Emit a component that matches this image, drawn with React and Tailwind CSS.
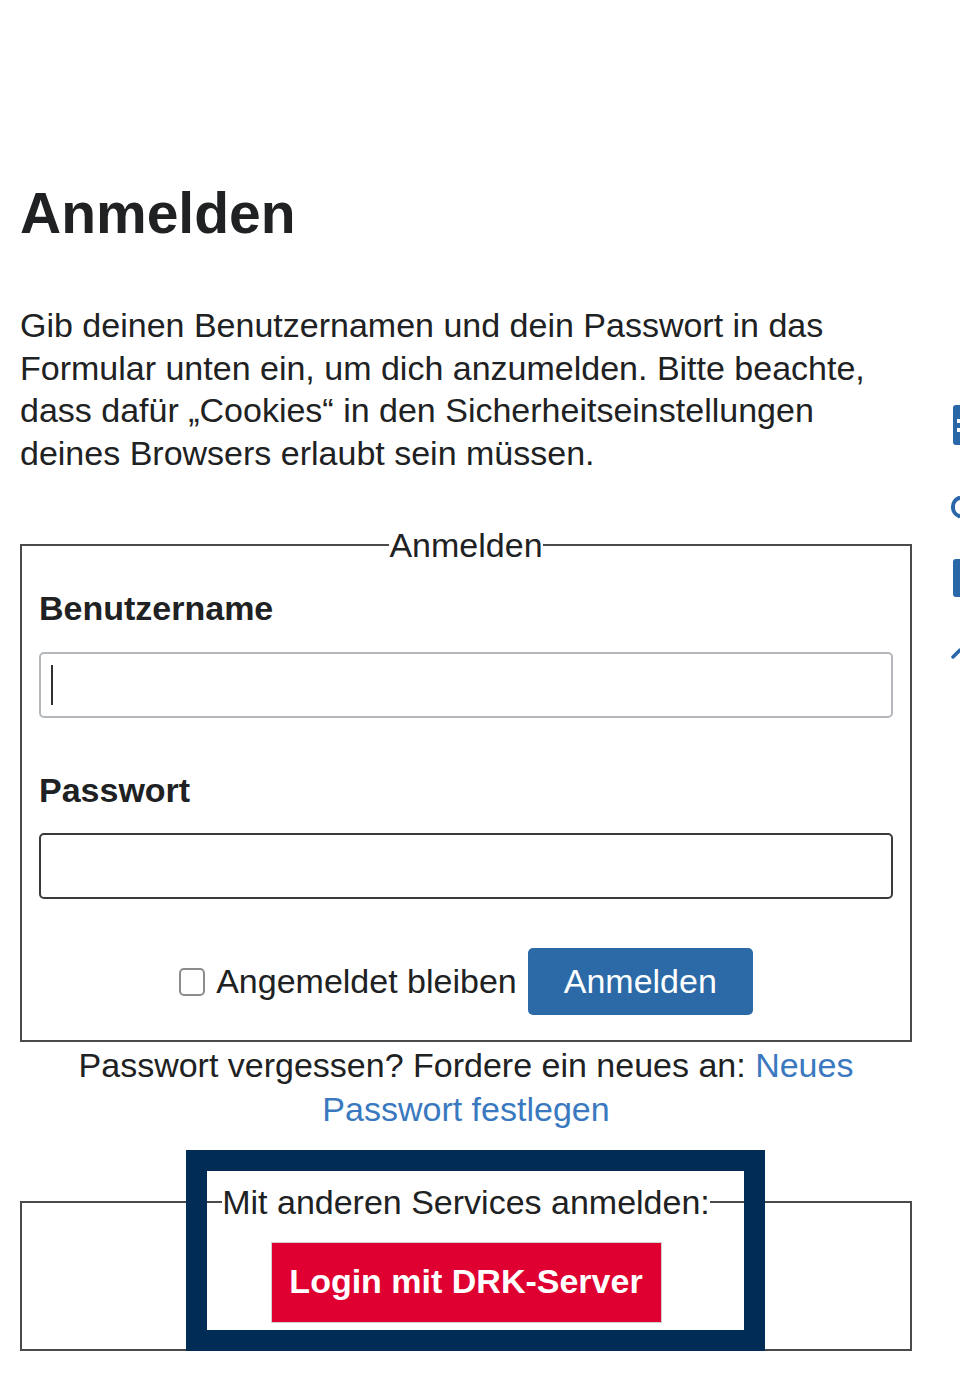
import { useState } from "react";

const font = { fontFamily: '"Liberation Sans", Arial, sans-serif' };

function SideIcons() {
  // partially visible toolbar icons cut off at the right edge
  return (
    <div className="absolute left-[950px] top-[400px] flex w-[10px] flex-col overflow-hidden">
      <div className="ml-[3px] mt-[5px] h-[40px] w-[14px] rounded-[3px] bg-[#2a67a8] flex flex-col justify-center gap-[5px] pl-[4px]">
        <span className="block h-[4px] w-[8px] bg-white" />
        <span className="block h-[4px] w-[8px] bg-white" />
      </div>
      <svg className="mt-[50px]" width="10" height="28" viewBox="0 0 10 28">
        <path d="M9 3 A 9 9 0 0 0 3 12 A 9 9 0 0 0 9 21" fill="none" stroke="#2a67a8" strokeWidth="4" strokeLinecap="round" />
      </svg>
      <div className="ml-[3px] mt-[36px] h-[38px] w-[14px] rounded-[3px] bg-[#2a67a8]" />
      <svg className="mt-[44px]" width="10" height="20" viewBox="0 0 10 20">
        <path d="M3 16 L10 9" fill="none" stroke="#2a67a8" strokeWidth="3.5" strokeLinecap="round" />
      </svg>
    </div>
  );
}

export default function App() {
  const [username, setUsername] = useState("");
  const [password, setPassword] = useState("");
  const [remember, setRemember] = useState(false);

  return (
    <div className="relative h-[1387px] w-full overflow-hidden bg-white text-[#202122]" style={font}>
      <SideIcons />

      <div className="ml-[20px] w-[892px]">
        <h1 className="pt-[178px] text-[57px] font-bold leading-[71px]">Anmelden</h1>

        <p className="mt-[55px] text-[34px] leading-[42.5px]">
          Gib deinen Benutzernamen und dein Passwort in das Formular unten ein, um dich anzumelden. Bitte beachte,
          dass dafür „Cookies“ in den Sicherheitseinstellungen deines Browsers erlaubt sein müssen.
        </p>

        <form onSubmit={(e) => e.preventDefault()}>
          <fieldset className="mt-[50px] border-2 border-[#4a4a4a] px-[17px] pb-[25px] pt-[20px]">
            <legend className="mx-auto text-[34px] leading-[42.5px]">Anmelden</legend>

            <label htmlFor="user" className="block text-[34px] font-bold leading-[42.5px]">
              Benutzername
            </label>
            <div className="relative mt-[23px]">
              <input
                id="user"
                type="text"
                value={username}
                onChange={(e) => setUsername(e.target.value)}
                className="block h-[66px] w-full rounded-[5px] border-2 border-[#b4b8bd] px-[13px] text-[34px] outline-none"
              />
              {username === "" && (
                <span className="absolute left-[12px] top-[13px] h-[40px] w-[2px] bg-[#303030]" />
              )}
            </div>

            <label htmlFor="pass" className="mt-[51px] block text-[34px] font-bold leading-[42.5px]">
              Passwort
            </label>
            <input
              id="pass"
              type="password"
              value={password}
              onChange={(e) => setPassword(e.target.value)}
              className="mt-[21.5px] block h-[66px] w-full rounded-[5px] border-2 border-[#3a3a3a] px-[13px] text-[34px] outline-none"
            />

            <div className="mt-[49px] flex items-center justify-center">
              <label className="flex items-center gap-[11px] text-[34px] leading-[42.5px]">
                <span
                  onClick={() => setRemember(!remember)}
                  className="block h-[28px] w-[26px] rounded-[5px] border-2 border-[#8c8c8c] bg-white"
                />
                Angemeldet bleiben
              </label>
              <button
                type="submit"
                className="ml-[11px] h-[67px] rounded-[5px] bg-[#2b6aa7] px-[36px] text-[34px] text-white"
              >
                Anmelden
              </button>
            </div>
          </fieldset>
        </form>

        <p className="mt-[1px] text-center text-[34px] leading-[44px]">
          Passwort vergessen? Fordere ein neues an:{" "}
          <a href="#" className="text-[#3a79c0]">
            Neues Passwort festlegen
          </a>
        </p>

        <div className="relative mt-[50px]">
          <fieldset className="border-2 border-[#4a4a4a] pb-[26px] pt-[18.5px]">
            <legend className="mx-auto text-[34px] leading-[42.5px]">Mit anderen Services anmelden:</legend>
            <div className="flex justify-center">
              <button
                type="button"
                className="h-[81px] w-[391px] border border-[#d0d0d0] bg-[#df0031] pb-[3px] text-[34px] font-bold text-white"
              >
                Login mit DRK-Server
              </button>
            </div>
          </fieldset>
          {/* highlight frame over the service login */}
          <div className="pointer-events-none absolute left-[166px] top-[-31px] h-[201px] w-[579px] border-[21px] border-[#002c56]" />
        </div>
      </div>
    </div>
  );
}
